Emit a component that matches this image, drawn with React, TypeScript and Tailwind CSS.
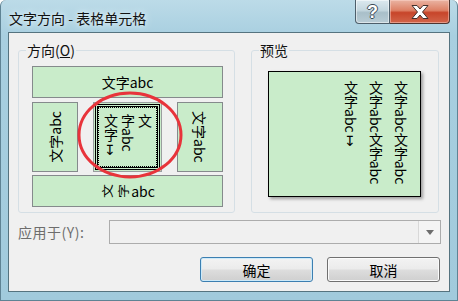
import React from "react";

const CJK = "font-['Noto_Sans_CJK_SC','Noto_Sans',sans-serif]";

function GreenBox({ className, children }: { className: string; children?: React.ReactNode }) {
  return (
    <div className={`flex items-center justify-center border border-[#858a8c] bg-[#c9ecca] text-[14px] leading-none text-black ${className}`}>
      {children}
    </div>
  );
}

function WinButton({ label, isDefault }: { label: string; isDefault?: boolean }) {
  return (
    <button
      type="button"
      className={`h-[25px] w-[113px] rounded-[3px] border text-[14px] leading-none text-black bg-[linear-gradient(#f3f3f3,#ebebeb_48%,#dddddd_52%,#cfcfcf)] ${
        isDefault
          ? "border-[#3c7fb1] shadow-[inset_0_0_0_1px_#cdeaf9]"
          : "border-[#707070] shadow-[inset_0_0_0_1px_#fbfbfb]"
      }`}
    >
      {label}
    </button>
  );
}

export default function App() {
  return (
    <div
      className={`relative flex h-[301px] w-[458px] flex-col overflow-hidden rounded-t-[6px] border-x border-b border-[#5f8394] bg-[linear-gradient(180deg,#bcdbe8_0%,#a8cfe0_12%,#a1cadc_100%)] ${CJK}`}
    >
      {/* title bar */}
      <div className="flex h-[32px] items-start">
        <div className="ml-[8px] mt-[8px] text-[14px] leading-[20px] text-[#111] [text-shadow:0_0_8px_#e4f2f8,0_0_4px_#e4f2f8]">
          文字方向 - 表格单元格
        </div>
        <div className="ml-auto mr-[7px] flex h-[24px]">
          <div className="flex w-[35px] items-center justify-center rounded-bl-[4px] border border-t-0 border-[#4d5e6a] bg-[linear-gradient(#dce9ef,#c3d6de_45%,#a9bfc9_55%,#b8ccd5)] shadow-[inset_0_0_0_1px_rgba(255,255,255,0.5)]">
            <span className="font-['Liberation_Sans',sans-serif] text-[18px] font-bold leading-none text-white [text-shadow:1px_0_0_#3b4a55,-1px_0_0_#3b4a55,0_1px_0_#3b4a55,0_-1px_0_#3b4a55]">
              ?
            </span>
          </div>
          <div className="flex w-[60px] items-center justify-center rounded-br-[4px] border border-l-0 border-t-0 border-[#4d3530] bg-[linear-gradient(#eab4a3,#dd8065_45%,#c7452a_55%,#d2654a)] shadow-[inset_0_0_0_1px_rgba(255,220,210,0.45)]">
            <svg width="22" height="16" viewBox="0 0 22 16">
              <path
                d="M3 1.5h5l3 3.5 3-3.5h5l-5.5 6.5 5.5 6.5h-5l-3-3.5-3 3.5H3l5.5-6.5z"
                fill="#fff"
                stroke="#42302c"
                strokeWidth="1"
                strokeLinejoin="round"
              />
            </svg>
          </div>
        </div>
      </div>

      {/* client area */}
      <div className="ml-[7px] flex h-[260px] w-[442px] flex-col border border-[#55737f] bg-[#f0f0f0]">
        <div className="ml-[9px] mt-[8px] flex">
          <fieldset className="h-[172px] w-[217px] rounded-[3px] border border-[#d5dfe5]">
            <legend className="ml-[7px] px-[1px] text-[14px] leading-[18px] text-[#111]">
              方向(<span className="underline">O</span>)
            </legend>
            <div className="ml-[13px] mt-[7px] flex w-[191px] flex-col">
              <GreenBox className="h-[32px] w-[191px]">文字abc</GreenBox>
              <div className="mt-[4px] flex h-[70px] gap-[15px]">
                <GreenBox className="h-[70px] w-[46px]">
                  <span className="rotate-180 [writing-mode:vertical-rl] [text-orientation:sideways]">文字abc</span>
                </GreenBox>
                <div className="h-[70px] w-[69px] border border-[#9a9e9f] bg-[#c9ecca] p-[1px]">
                  <div className="flex h-full w-full justify-center border-[3px] border-double border-black bg-[#c9ecca] pt-[7px] outline-1 -outline-offset-[4px] outline-dotted outline-black">
                    <div className="text-[14px] leading-[17px] text-black [writing-mode:vertical-rl]">
                      文<br />
                      字abc<br />
                      文字<span className="[text-orientation:upright]">↧</span>
                    </div>
                  </div>
                </div>
                <GreenBox className="h-[70px] w-[46px]">
                  <span className="[writing-mode:vertical-rl] [text-orientation:sideways]">文字abc</span>
                </GreenBox>
              </div>
              <GreenBox className="mt-[3px] h-[32px] w-[191px]">
                <span className="mr-[2px] inline-block -rotate-90 scale-y-[0.85]">文</span>
                <span className="mr-[1px] inline-block -rotate-90 scale-y-[0.85]">字</span>
                <span>abc</span>
              </GreenBox>
            </div>
          </fieldset>

          <fieldset className="ml-[16px] h-[172px] w-[188px] rounded-[3px] border border-[#d5dfe5]">
            <legend className="ml-[7px] px-[1px] text-[14px] leading-[18px] text-[#111]">预览</legend>
            <div className="ml-[16px] mt-[12px] flex h-[126px] w-[153px] justify-end border border-black bg-[#c9ecca] pr-[7px] pt-[9px] shadow-[2px_2px_3px_rgba(0,0,0,0.35)]">
              <div className="text-[14px] leading-[25px] text-black [writing-mode:vertical-rl]">
                文字abc文字abc<br />
                文字abc文字abc<br />
                文字abc<span className="[text-orientation:upright]">↧</span>
              </div>
            </div>
          </fieldset>
        </div>

        {/* apply to */}
        <div className="ml-[9px] mt-[7px] flex h-[24px] items-center">
          <div className="w-[91px] text-[14px] leading-none tracking-[0.5px] text-[#6d6d6d]">应用于(Y):</div>
          <div className="flex h-[24px] w-[332px] border border-[#acacac] bg-[#f0f0f0]">
            <div className="flex-1" />
            <div className="flex w-[22px] items-center justify-center border-l border-[#d8d8d8] bg-[#f4f4f4]">
              <svg width="8" height="5" viewBox="0 0 8 5">
                <path d="M0 0h8L4 5z" fill="#6d6d6d" />
              </svg>
            </div>
          </div>
        </div>

        {/* buttons */}
        <div className="mr-[9px] mt-[13px] flex justify-end gap-[14px]">
          <WinButton label="确定" isDefault />
          <WinButton label="取消" />
        </div>
      </div>

      {/* highlight ellipse drawn over the dialog */}
      <svg className="pointer-events-none absolute left-[75px] top-[90px]" width="108" height="90" viewBox="0 0 108 90">
        <ellipse cx="54" cy="45" rx="51" ry="42" fill="none" stroke="#e8343b" strokeWidth="3" />
      </svg>
    </div>
  );
}
